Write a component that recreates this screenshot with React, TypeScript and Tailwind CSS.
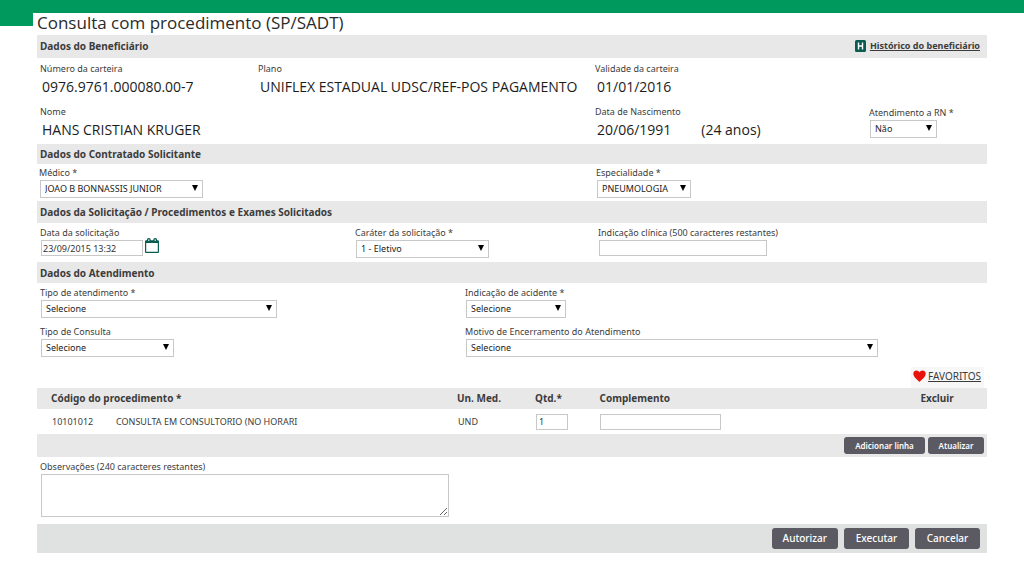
import type { ReactNode } from 'react';

type SelectProps = {
  id: string;
  value: string;
  className?: string;
};

const Select = ({ id, value, className = '' }: SelectProps) => (
  <div className={`relative ml-px h-[18px] ${className}`}>
    <select
      id={id}
      defaultValue={value}
      className="block h-full w-full appearance-none border border-[#c8c8c8] bg-white pl-1 pr-4 text-[9px] leading-[16px] text-[#222]"
    >
      <option>{value}</option>
    </select>
    <svg viewBox="0 0 6 6" className="pointer-events-none absolute right-[5px] top-[5px] h-[6px] w-[6px]" aria-hidden="true">
      <path d="M0 0h6L3 6z" fill="#000" />
    </svg>
  </div>
);

type FieldProps = {
  label: string;
  htmlFor?: string;
  className?: string;
  children: ReactNode;
};

const Field = ({ label, htmlFor, className = '', children }: FieldProps) => (
  <div className={`flex min-w-0 flex-col items-start ${className}`}>
    <label htmlFor={htmlFor} className="whitespace-nowrap leading-[15px]">
      {label}
    </label>
    {children}
  </div>
);

const Info = ({ label, children }: { label: string; children: ReactNode }) => (
  <dl>
    <dt className="leading-[15px]">{label}</dt>
    <dd className="whitespace-nowrap pl-[2px] font-['Open_Sans','Noto_Sans',sans-serif] text-[14px] leading-[21px] text-[#1c1c1c]">
      {children}
    </dd>
  </dl>
);

const SectionHeader = ({ title, className = '', children }: { title: string; className?: string; children?: ReactNode }) => (
  <div className={`flex items-center justify-between bg-[#e8e8e8] pl-[3px] pr-[7px] ${className}`}>
    <h2 className="text-[10px] font-bold leading-[14px]">{title}</h2>
    {children}
  </div>
);

const HistoryIcon = () => (
  <svg viewBox="0 0 11 12" className="h-[12px] w-[11px]" aria-hidden="true">
    <rect width="11" height="12" rx="1.5" fill="#0b5c50" />
    <path d="M3.5 2.5v7M7.5 2.5v7M3.5 6h4" stroke="#fff" strokeWidth="1.4" fill="none" />
  </svg>
);

const CalendarIcon = () => (
  <svg viewBox="0 0 14 15" className="h-[15px] w-[14px]" aria-hidden="true">
    <rect x="0.6" y="3" width="12.8" height="11.4" rx="0.5" fill="#fff" stroke="#0b5c50" strokeWidth="1.2" />
    <path d="M0.5 2.4h13v2.6h-13z" fill="#0b5c50" />
    <rect x="2" y="0" width="3.6" height="4.4" rx="1.6" fill="#0b5c50" />
    <rect x="8.4" y="0" width="3.6" height="4.4" rx="1.6" fill="#0b5c50" />
    <path d="M3.8 1.4v1.6M10.2 1.4v1.6" stroke="#fff" strokeWidth="1" />
  </svg>
);

const HeartIcon = () => (
  <svg viewBox="0 0 14 13" className="h-[12px] w-[13px]" aria-hidden="true">
    <path
      d="M7 13C5.5 11 0.3 8 0.3 4C0.3 1.700 2 0.5 3.7 0.5C5.3 0.5 6.5 1.5 7 2.7C7.5 1.5 8.7 0.5 10.3 0.5C12 0.5 13.7 1.7 13.7 4C13.7 8 8.5 11 7 13Z"
      fill="#e8140c"
    />
  </svg>
);

const inputStyle = 'border border-[#c8c8c8] bg-white text-[9px] text-[#333]';

const columns = [
  { name: 'Código do procedimento *', width: 'w-[44%] pl-[14px]' },
  { name: 'Un. Med.', width: 'w-[8%] pl-[2px]' },
  { name: 'Qtd.*', width: 'w-[7%] pl-[4px]' },
  { name: 'Complemento', width: 'w-[34%] pl-[2px]' },
  { name: 'Excluir', width: 'w-[7%]' },
];

const actions = ['Autorizar', 'Executar', 'Cancelar'];

const App = () => {
  return (
    <div className="bg-white font-['Noto_Sans','Open_Sans',sans-serif] text-[9px] text-[#3c3c3c]">
      <div className="h-[13px] bg-[#00995d]" />
      <div className="flex items-start">
        <div className="h-[13px] w-[33px] shrink-0 bg-[#00995d]" />

        <main className="min-w-0 flex-1 pl-1 pr-[37px]">
          <h1 className="mb-[2px] whitespace-nowrap font-['Open_Sans','Noto_Sans',sans-serif] text-[17px] leading-[20px] text-[#2b2b2b]">
            Consulta com procedimento (SP/SADT)
          </h1>

          {/* Beneficiário */}
          <SectionHeader title="Dados do Beneficiário" className="h-[23px] pb-px">
            <div className="flex items-center gap-1">
              <HistoryIcon />
              <a href="#historico" className="font-bold leading-[14px] underline">
                Histórico do beneficiário
              </a>
            </div>
          </SectionHeader>
          <div className="grid grid-cols-[218fr_337fr_274fr_118fr] gap-y-[7px] pb-1 pl-[3px] pt-[3px]">
            <Info label="Número da carteira">0976.9761.000080.00-7</Info>
            <Info label="Plano">UNIFLEX ESTADUAL UDSC/REF-POS PAGAMENTO</Info>
            <Info label="Validade da carteira">01/01/2016</Info>
            <div />
            <div className="col-span-2">
              <Info label="Nome">HANS CRISTIAN KRUGER</Info>
            </div>
            <Info label="Data de Nascimento">
              <span className="flex gap-[30px]">
                <span>20/06/1991</span>
                <span>(24 anos)</span>
              </span>
            </Info>
            <Field label="Atendimento a RN *" htmlFor="rn" className="pt-px">
              <Select id="rn" value="Não" className="w-[67px]" />
            </Field>
          </div>

          {/* Contratado */}
          <SectionHeader title="Dados do Contratado Solicitante" className="h-[20px]" />
          <div className="grid grid-cols-[557fr_391fr] pb-[3px] pl-[2px] pt-px">
            <Field label="Médico *" htmlFor="medico">
              <Select id="medico" value="JOAO B BONNASSIS JUNIOR" className="w-[163px]" />
            </Field>
            <Field label="Especialidade *" htmlFor="especialidade">
              <Select id="especialidade" value="PNEUMOLOGIA" className="w-[94px]" />
            </Field>
          </div>

          {/* Solicitação */}
          <SectionHeader title="Dados da Solicitação / Procedimentos e Exames Solicitados" className="h-[22px]" />
          <div className="grid grid-cols-[315fr_243fr_389fr] pb-1 pl-[3px] pt-[2px]">
            <Field label="Data da solicitação" htmlFor="data">
              <div className="flex h-[18px] items-start gap-[2px] pl-px">
                <input id="data" defaultValue="23/09/2015 13:32" className={`h-[16px] w-[102px] px-px ${inputStyle}`} />
                <button type="button" aria-label="Abrir calendário" className="-mt-[2px]">
                  <CalendarIcon />
                </button>
              </div>
            </Field>
            <Field label="Caráter da solicitação *" htmlFor="carater">
              <Select id="carater" value="1 - Eletivo" className="w-[133px]" />
            </Field>
            <Field label="Indicação clínica (500 caracteres restantes)" htmlFor="clinica">
              <input id="clinica" className={`ml-px h-[16px] w-[168px] px-1 ${inputStyle}`} />
            </Field>
          </div>

          {/* Atendimento */}
          <SectionHeader title="Dados do Atendimento" className="h-[21px]" />
          <div className="grid grid-cols-[425fr_522fr] gap-y-[6px] pl-[3px] pt-[2px]">
            <Field label="Tipo de atendimento *" htmlFor="tipo">
              <Select id="tipo" value="Selecione" className="w-[236px]" />
            </Field>
            <Field label="Indicação de acidente *" htmlFor="acidente">
              <Select id="acidente" value="Selecione" className="w-[100px]" />
            </Field>
            <Field label="Tipo de Consulta" htmlFor="consulta">
              <Select id="consulta" value="Selecione" className="w-[133px]" />
            </Field>
            <Field label="Motivo de Encerramento do Atendimento" htmlFor="motivo">
              <Select id="motivo" value="Selecione" className="w-[79%]" />
            </Field>
          </div>

          {/* Procedimentos */}
          <div className="mt-[10px] flex justify-end pr-[3px]">
            <a href="#favoritos" className="flex h-[21px] items-center gap-[2px] bg-[#f7f7f7] pb-[3px] pl-[2px] pr-[3px]">
              <HeartIcon />
              <span className="text-[10px] underline">FAVORITOS</span>
            </a>
          </div>
          <table className="w-full table-fixed border-collapse text-left">
            <thead>
              <tr className="h-[21px] bg-[#e8e8e8] text-[10px]">
                {columns.map((column) => (
                  <th key={column.name} scope="col" className={`whitespace-nowrap py-0 font-bold ${column.width}`}>
                    {column.name}
                  </th>
                ))}
              </tr>
            </thead>
            <tbody>
              <tr className="h-[25px]">
                <td className="py-0 pl-[15px]">
                  <div className="flex">
                    <span className="w-[64px]">10101012</span>
                    <span className="whitespace-nowrap">CONSULTA EM CONSULTORIO (NO HORARI</span>
                  </div>
                </td>
                <td className="py-0 pl-[3px]">UND</td>
                <td className="py-0 pl-[5px]">
                  <input aria-label="Quantidade" defaultValue="1" className={`block h-[16px] w-[32px] px-[2px] ${inputStyle}`} />
                </td>
                <td className="py-0 pl-[2px]">
                  <input aria-label="Complemento" className={`block h-[16px] w-[121px] px-1 ${inputStyle}`} />
                </td>
                <td />
              </tr>
            </tbody>
          </table>
          <div className="flex h-[23px] items-center justify-end gap-[3px] bg-[#e8e8e8] pr-[3px]">
            <button type="button" className="h-[17px] w-[81px] rounded-[3px] bg-[#5b5a63] text-[8px] font-semibold text-white">
              Adicionar linha
            </button>
            <button type="button" className="h-[17px] w-[56px] rounded-[3px] bg-[#5b5a63] text-[8px] font-semibold text-white">
              Atualizar
            </button>
          </div>

          {/* Observações */}
          <div className="pb-[7px] pl-[3px] pt-[2px]">
            <Field label="Observações (240 caracteres restantes)" htmlFor="obs">
              <textarea id="obs" className={`ml-px block h-[43px] w-[408px] resize p-1 ${inputStyle}`} />
            </Field>
          </div>

          <div className="flex h-[29px] items-center justify-end gap-[6px] bg-[#e0e2e1] pr-[7px]">
            {actions.map((action) => (
              <button
                key={action}
                type="button"
                className="h-[21px] min-w-[65px] rounded-[3px] bg-[#5b5a63] px-[11px] text-[10px] font-medium text-white"
              >
                {action}
              </button>
            ))}
          </div>
        </main>
      </div>
    </div>
  );
};

export default App;
